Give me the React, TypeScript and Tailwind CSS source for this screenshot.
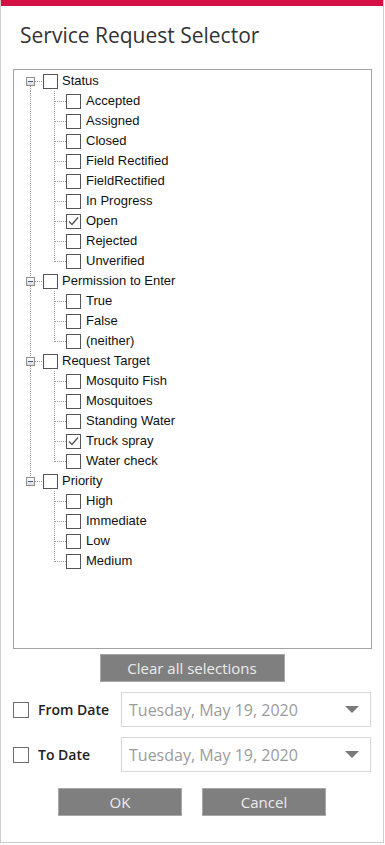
import React from "react";

type Group = { label: string; items: string[]; checked: string[] };

const groups: Group[] = [
  {
    label: "Status",
    items: ["Accepted", "Assigned", "Closed", "Field Rectified", "FieldRectified", "In Progress", "Open", "Rejected", "Unverified"],
    checked: ["Open"],
  },
  { label: "Permission to Enter", items: ["True", "False", "(neither)"], checked: [] },
  {
    label: "Request Target",
    items: ["Mosquito Fish", "Mosquitoes", "Standing Water", "Truck spray", "Water check"],
    checked: ["Truck spray"],
  },
  { label: "Priority", items: ["High", "Immediate", "Low", "Medium"], checked: [] },
];

const dot = { stroke: "#9c9c9c", strokeWidth: 1, strokeDasharray: "1 1" };

function TreeBox({ checked }: { checked?: boolean }) {
  return (
    <span className="flex h-[15px] w-[15px] shrink-0 items-center justify-center border border-[#555555] bg-white">
      {checked && (
        <svg width="13" height="13" viewBox="0 0 13 13">
          <polyline points="2,6.5 5,9.5 11,2.5" fill="none" stroke="#555555" strokeWidth="1.4" />
        </svg>
      )}
    </span>
  );
}

function ParentRow({ label, first, last }: { label: string; first: boolean; last: boolean }) {
  return (
    <div className="flex h-5 items-center">
      <svg width="29" height="20" className="shrink-0">
        <defs>
          <linearGradient id="mb" x1="0" y1="0" x2="0" y2="1">
            <stop offset="0" stopColor="#ffffff" />
            <stop offset="1" stopColor="#d6d6d6" />
          </linearGradient>
        </defs>
        {!first && <line x1="16.5" y1="0" x2="16.5" y2="6" {...dot} />}
        {!last && <line x1="16.5" y1="15" x2="16.5" y2="20" {...dot} />}
        <line x1="21" y1="10.5" x2="29" y2="10.5" {...dot} />
        <rect x="12.5" y="6.5" width="8" height="8" fill="url(#mb)" stroke="#919191" />
        <line x1="14" y1="10.5" x2="19" y2="10.5" stroke="#3f5f96" strokeWidth="1" />
      </svg>
      <TreeBox />
      <span className="ml-[4px] whitespace-nowrap text-[13px] text-[#111111]">{label}</span>
    </div>
  );
}

function ChildRow({ label, lastGroup, lastChild, checked }: { label: string; lastGroup: boolean; lastChild: boolean; checked: boolean }) {
  return (
    <div className="flex h-5 items-center">
      <svg width="52" height="20" className="shrink-0">
        {!lastGroup && <line x1="16.5" y1="0" x2="16.5" y2="20" {...dot} />}
        <line x1="40.5" y1="0" x2="40.5" y2={lastChild ? 11 : 20} {...dot} />
        <line x1="41" y1="10.5" x2="52" y2="10.5" {...dot} />
      </svg>
      <TreeBox checked={checked} />
      <span className="ml-[5px] whitespace-nowrap text-[13px] text-[#111111]">{label}</span>
    </div>
  );
}

function DateRow({ label }: { label: string }) {
  return (
    <div className="flex items-center pl-[12px] pr-[12px]">
      <span className="h-4 w-4 shrink-0 border border-[#6e6e6e] bg-white" />
      <span className="ml-[9px] text-[14px] font-semibold text-[#222222]">{label}</span>
      <div className="ml-auto flex h-[35px] w-[250px] items-center border border-[#d6d6d6] bg-white pl-[7px] pr-[11px]">
        <span className="text-[16px] text-[#9b9b9b]">Tuesday, May 19, 2020</span>
        <svg width="14" height="7" viewBox="0 0 14 7" className="ml-auto">
          <polygon points="0,0 14,0 7,7" fill="#7a7a7a" />
        </svg>
      </div>
    </div>
  );
}

export default function App() {
  return (
    <div className="flex w-[384px] flex-col border-x border-b border-[#cccccc] bg-white font-['Open_Sans',sans-serif]">
      <div className="h-[6px] bg-[#d31145]" />
      <div className="h-[63px] pl-[19px] pt-[19px]">
        <h1 className="text-[21px] leading-[21px] text-[#333333]">Service Request Selector</h1>
      </div>

      <div className="ml-[12px] h-[580px] w-[359px] border border-[#a3a3a3] bg-white pt-[1px] font-['Liberation_Sans',Arial,sans-serif]">
        {groups.map((g, gi) => {
          const lastGroup = gi === groups.length - 1;
          return (
            <div key={g.label}>
              <ParentRow label={g.label} first={gi === 0} last={lastGroup} />
              {g.items.map((item, ii) => (
                <ChildRow
                  key={item}
                  label={item}
                  lastGroup={lastGroup}
                  lastChild={ii === g.items.length - 1}
                  checked={g.checked.includes(item)}
                />
              ))}
            </div>
          );
        })}
      </div>

      <div className="mt-[5px] flex justify-center">
        <button className="h-[28px] w-[185px] border border-[#a8a8a8] bg-[#7f7f7f] text-[15px] text-[#ececec]">
          Clear all selections
        </button>
      </div>

      <div className="mt-[10px]">
        <DateRow label="From Date" />
      </div>
      <div className="mt-[10px]">
        <DateRow label="To Date" />
      </div>

      <div className="mt-[16px] mb-[26px] flex justify-center gap-[20px]">
        <button className="h-[28px] w-[124px] border border-[#a8a8a8] bg-[#7f7f7f] text-[15px] text-[#ececec]">OK</button>
        <button className="h-[28px] w-[124px] border border-[#a8a8a8] bg-[#7f7f7f] text-[15px] text-[#ececec]">Cancel</button>
      </div>
    </div>
  );
}
